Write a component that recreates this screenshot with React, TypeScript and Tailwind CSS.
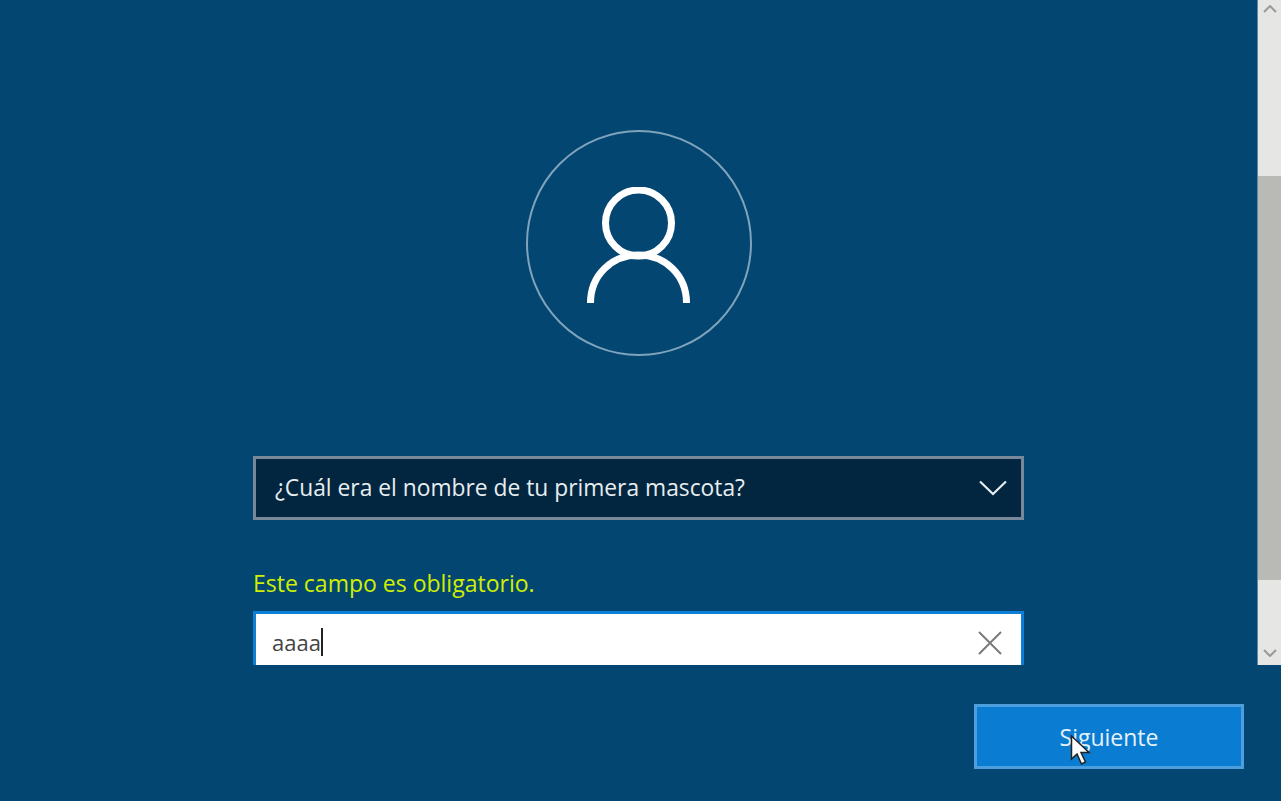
export default function App() {
  return (
    <div className="relative flex h-[801px] w-full flex-col overflow-hidden bg-[#034672] font-['Open_Sans','Noto_Sans',sans-serif] text-white">
      <div className="flex h-[665px]">
        <div className="min-w-0 flex-1 overflow-hidden pl-[253px] pt-[130px]">
          <div className="w-[771px]">
            <div className="mx-auto flex h-[226px] w-[226px] items-center justify-center rounded-full border-2 border-[#7fa3bb] pt-[4px]">
              <svg width="103" height="116" viewBox="0 0 103 116" fill="none" stroke="white" strokeWidth="7">
                <circle cx="51.5" cy="36" r="33" />
                <path d="M3.5 116 C3.5 88 25 68 51.5 68 C78 68 99.5 88 99.5 116" />
              </svg>
            </div>

            {/* pregunta de seguridad */}
            <div className="mt-[100px] flex h-[64px] items-center justify-between border-[3px] border-[#76889a] bg-[#02263f] pl-[19px] pr-[14px]">
              <span className="text-[22.8px] text-[#e8edf0]">¿Cuál era el nombre de tu primera mascota?</span>
              <svg width="28" height="16" viewBox="0 0 28 16" fill="none" stroke="#e8edf0" strokeWidth="2.2">
                <path d="M1 1.5 L14 14 L27 1.5" />
              </svg>
            </div>

            <p className="mt-[46px] h-[32px] text-[23px] leading-[34px] text-[#d0f000]">Este campo es obligatorio.</p>

            <div className="mt-[13px] flex h-[60px] w-[771px] items-start justify-between border-[3px] border-[#0f7fd6] bg-white pl-[16px] pr-[18px] pt-[12px]">
              <div className="flex h-[32px] items-center">
                <span className="text-[22px] leading-[32px] text-[#444444]">aaaa</span>
                <span className="h-[28px] w-[2px] bg-[#222222]" />
              </div>
              <svg className="mt-[4px]" width="26" height="26" viewBox="0 0 26 26" fill="none" stroke="#7a7a7a" strokeWidth="2">
                <path d="M2 2 L24 24 M24 2 L2 24" />
              </svg>
            </div>
          </div>
        </div>

        {/* barra de desplazamiento */}
        <div className="flex w-[24px] flex-col border-l border-[#5b8bab] bg-[#e6e6e4]">
          <div className="flex h-[176px] justify-center pt-[5px]">
            <svg width="14" height="8" viewBox="0 0 14 8" fill="none" stroke="#9a9a9a" strokeWidth="2">
              <path d="M1 7 L7 1 L13 7" />
            </svg>
          </div>
          <div className="h-[404px] bg-[#b9b9b6]" />
          <div className="flex flex-1 items-end justify-center pb-[8px]">
            <svg width="14" height="8" viewBox="0 0 14 8" fill="none" stroke="#9a9a9a" strokeWidth="2">
              <path d="M1 1 L7 7 L13 1" />
            </svg>
          </div>
        </div>
      </div>

      <div className="flex justify-end pr-[37px] pt-[39px]">
        <button className="h-[65px] w-[270px] border-[3px] border-[#4c9fdc] bg-[#0a7cd2] pt-[2px] text-[23px] text-[#e4f1fb]">
          Siguiente
        </button>
      </div>

      {/* puntero del ratón */}
      <svg className="absolute left-[1070px] top-[735px]" width="22" height="31" viewBox="0 0 22 31">
        <path d="M1.5 1 L1.5 24 L7 19 L11.5 29 L15.5 27 L11 17.5 L19 17.5 Z" fill="white" stroke="#222222" strokeWidth="1.5" />
      </svg>
    </div>
  );
}
